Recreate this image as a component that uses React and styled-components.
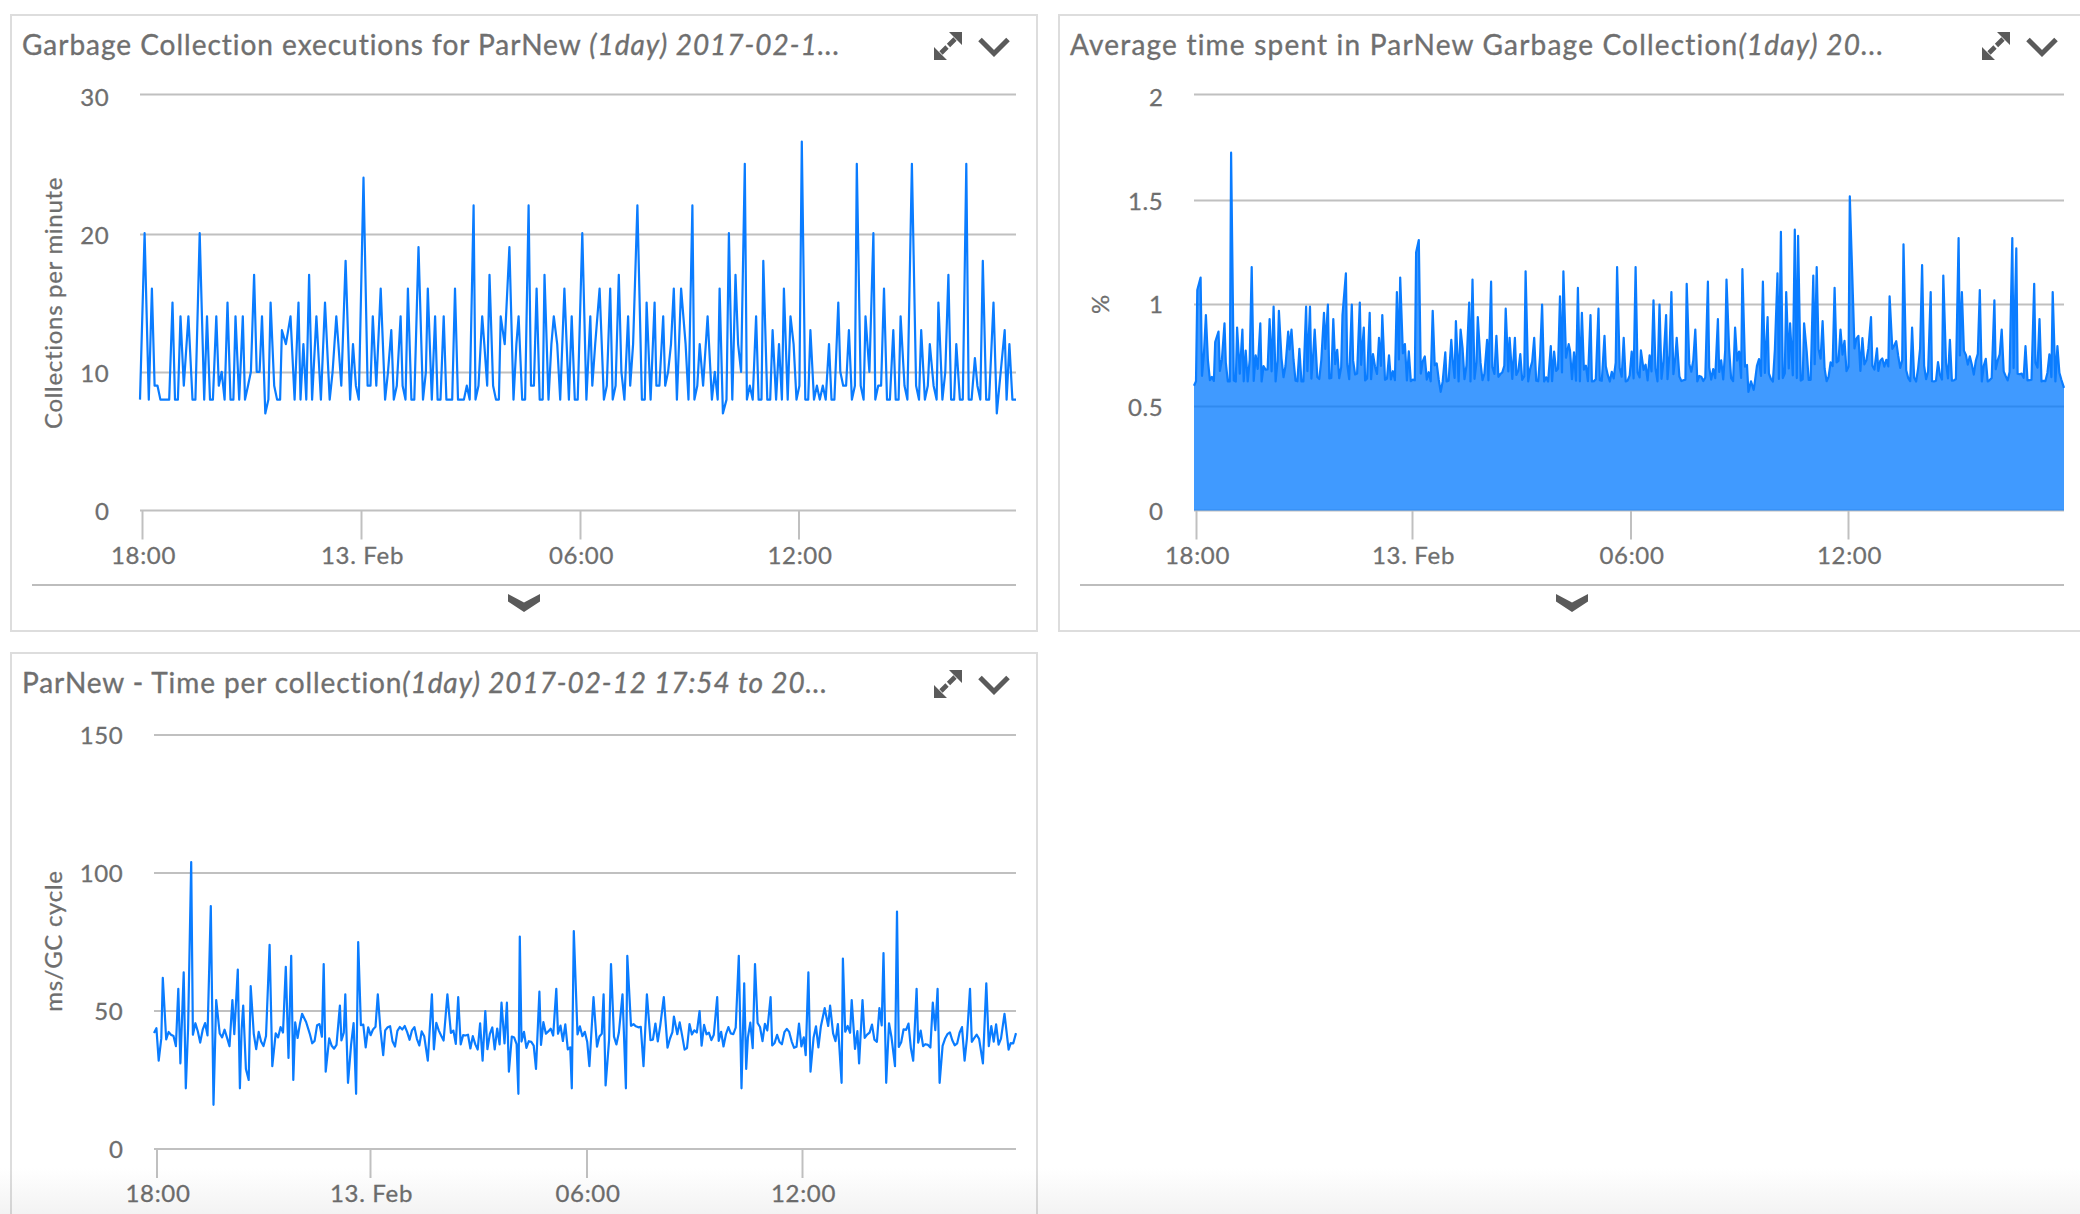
import React from 'react';
import styled, { createGlobalStyle } from 'styled-components';

const GlobalStyle = createGlobalStyle`
  html, body {
    margin: 0;
    height: 100%;
    overflow: hidden;
    background: #fff;
    font-family: Lato, "Liberation Sans", sans-serif;
  }
`;

const Dashboard = styled.div`
  display: grid;
  grid-template-columns: 1028px 1028px;
  grid-auto-rows: 618px;
  gap: 20px;
  padding: 14px 0 0 10px;
  width: 2080px;
  height: 1214px;
  box-sizing: border-box;
  overflow: hidden;
`;

const Card = styled.section`
  display: flex;
  flex-direction: column;
  border: 2px solid #ddd;
  background: #fff;
`;

const Header = styled.header`
  display: flex;
  justify-content: space-between;
  align-items: flex-start;
  height: 60px;
  box-sizing: border-box;
  padding: 16px 26px 0 10px;
  color: #6f6f6f;
`;

const Title = styled.h2`
  margin: -3px 0 0;
  font-size: 28px;
  line-height: 30px;
  font-weight: 400;
  white-space: nowrap;
  letter-spacing: ${(p) => p.$tracking}px;
  -webkit-text-stroke: 0.35px #6f6f6f;
  em { font-style: italic; }
`;

const Tools = styled.div`
  display: flex;
  align-items: flex-start;
  gap: 16px;
`;

const ExpandIcon = styled.svg`
  width: 28px;
  height: 28px;
`;

const DownIcon = styled.svg`
  width: 32px;
  height: 20px;
  margin-top: 5px;
`;

const Chart = styled.svg`
  display: block;
  width: 1024px;
  height: 508px;
  flex: none;
`;

const AxisLabel = styled.text`
  font-family: Lato, "Liberation Sans", sans-serif;
  font-size: 24px;
  letter-spacing: 0.7px;
  fill: #6e6e6e;
  stroke: #6e6e6e;
  stroke-width: 0.3px;
  text-anchor: ${(p) => p.$anchor || 'middle'};
`;

const Footer = styled.footer`
  display: flex;
  justify-content: center;
  margin: 0 20px;
  padding-top: 8px;
  border-top: 2px solid #bdbdbd;
`;

const FooterIcon = styled.svg`
  width: 32px;
  height: 18px;
`;

const BottomFade = styled.div`
  position: fixed;
  left: 0;
  right: 0;
  bottom: 0;
  height: 46px;
  background: linear-gradient(to bottom, #fff, #f3f3f3);
  mix-blend-mode: multiply;
  pointer-events: none;
`;

// small seeded generator, keeps the noise the same on every reload
const makeRandom = (seed) => {
  let s = seed;
  return () => {
    s = (s * 16807) % 2147483647;
    return s / 2147483647;
  };
};

function buildSeries({ from, to, step, seed, base, spikes }) {
  const next = makeRandom(seed);
  const points = [];
  for (let x = from; x <= to; x += step) points.push([x, base(next(), x)]);
  const kept = points.filter(([x]) => !spikes.some(([sx]) => Math.abs(sx - x) < step * 0.6));
  return [...kept, ...spikes].sort((a, b) => a[0] - b[0]);
}

const collectionsSeries = buildSeries({
  from: 211,
  to: 1532,
  step: 4.4,
  seed: 4711,
  base: (r) => [8, 8, 8, 8, 8, 9, 9, 9, 8, 10, 8, 12][Math.floor(r * 12)],
  spikes: [
    [211, 8], [218, 20], [229, 16], [260, 15], [272, 14], [284, 14], [301, 20], [312, 14], [326, 14], [343, 15],
    [355, 14], [366, 14], [383, 17], [395, 14], [400, 7], [408, 15], [425, 13], [438, 14], [450, 15], [466, 17],
    [477, 14], [490, 15], [507, 14], [521, 18], [548, 24], [562, 14], [574, 16], [590, 13], [604, 14], [615, 16],
    [631, 19], [645, 16], [656, 14], [669, 14], [686, 16], [714, 22], [727, 14], [738, 17], [755, 14], [768, 19],
    [782, 14], [797, 22], [809, 16], [821, 17], [835, 14], [851, 16], [862, 14], [878, 20], [890, 14], [904, 16],
    [920, 16], [933, 17], [947, 14], [961, 22], [975, 15], [987, 15], [1000, 14], [1016, 16], [1027, 16], [1044, 22],
    [1055, 12], [1067, 14], [1085, 16], [1090, 7], [1099, 20], [1109, 17], [1123, 25], [1140, 14], [1151, 18],
    [1165, 13], [1182, 16], [1192, 14], [1209, 26.6], [1222, 13], [1250, 12], [1264, 15], [1280, 13], [1292, 25],
    [1305, 14], [1317, 20], [1333, 16], [1347, 13], [1358, 14], [1375, 25], [1389, 13], [1402, 12], [1415, 15],
    [1430, 17], [1442, 12], [1457, 25], [1470, 11], [1482, 18], [1498, 15], [1503, 7], [1515, 13], [1522, 12],
    [1532, 8],
  ],
});

const averageSeries = buildSeries({
  from: 232,
  to: 1544,
  step: 3,
  seed: 913,
  base: (r, x) => 0.62 + r * r * 0.16 + (x > 1190 && x < 1300 ? 0.05 : 0),
  spikes: [
    [232, 0.6], [237, 1.06], [242, 1.12], [250, 0.94], [264, 0.81], [269, 0.86], [278, 0.9], [288, 1.72], [297, 0.88],
    [305, 0.87], [319, 1.17], [332, 0.9], [346, 0.92], [352, 0.98], [360, 0.96], [374, 0.86], [379, 0.87], [401, 0.98],
    [407, 0.98], [414, 0.87], [428, 0.95], [434, 0.99], [442, 0.92], [456, 0.94], [461, 1.14], [470, 0.99], [482, 1.0],
    [488, 0.88], [497, 0.95], [511, 0.83], [516, 0.94], [538, 1.05], [543, 1.12], [550, 0.8], [567, 1.24], [571, 1.3],
    [592, 0.96], [604, 0.57], [611, 0.76], [620, 0.82], [627, 0.91], [634, 0.87], [647, 1.0], [652, 1.11], [660, 0.93],
    [674, 0.82], [680, 1.1], [688, 0.84], [702, 0.97], [708, 0.83], [716, 0.83], [732, 1.15], [745, 0.83], [757, 0.99],
    [770, 0.79], [784, 1.03], [789, 1.15], [797, 0.8], [811, 1.07], [817, 0.95], [830, 0.94], [842, 0.97], [851, 0.84],
    [870, 1.17], [880, 0.83], [898, 1.17], [906, 0.77], [925, 1.01], [934, 0.99], [944, 0.94], [952, 1.05], [960, 0.83],
    [975, 1.09], [988, 0.87], [1007, 1.1], [1022, 0.92], [1035, 1.11], [1048, 0.88], [1059, 1.16], [1068, 0.57],
    [1076, 0.58], [1090, 1.1], [1097, 0.93], [1112, 1.14], [1117, 1.34], [1125, 1.05], [1131, 0.9], [1138, 1.35],
    [1143, 1.32], [1152, 0.9], [1166, 1.13], [1171, 1.17], [1180, 0.91], [1198, 1.07], [1207, 0.87], [1221, 1.51],
    [1226, 1.0], [1234, 0.84], [1253, 0.93], [1262, 0.78], [1281, 1.03], [1302, 1.28], [1315, 0.88], [1330, 1.18],
    [1343, 1.05], [1362, 1.13], [1372, 0.82], [1385, 1.31], [1390, 1.05], [1417, 1.06], [1439, 1.01], [1450, 0.87],
    [1466, 1.31], [1472, 1.26], [1486, 0.79], [1499, 1.09], [1507, 0.92], [1527, 1.05], [1534, 0.79], [1540, 0.63],
    [1544, 0.59],
  ],
});

const timeSeries = buildSeries({
  from: 228,
  to: 1503,
  step: 3.6,
  seed: 2203,
  base: (r) => 36 + r * 10,
  spikes: [
    [228, 42], [235, 32], [241, 62], [264, 58], [267, 31], [272, 64], [275, 22], [283, 104], [312, 88], [316, 16],
    [320, 54], [344, 54], [352, 65], [355, 22], [360, 52], [364, 29], [368, 25], [371, 59], [399, 74], [403, 30],
    [423, 66], [427, 33], [431, 70], [434, 25], [447, 49], [453, 46], [479, 67], [482, 28], [503, 52], [511, 56],
    [515, 24], [527, 20], [530, 75], [559, 56], [567, 34], [633, 32], [639, 56], [662, 56], [678, 55], [714, 32],
    [718, 50], [742, 53], [750, 53], [753, 28], [767, 20], [769, 77], [793, 29], [798, 57], [823, 58], [846, 22],
    [849, 79], [872, 30], [878, 55], [893, 56], [896, 23], [904, 67], [921, 56], [926, 22], [928, 70], [952, 30],
    [957, 56], [982, 55], [997, 48], [1035, 50], [1061, 55], [1093, 70], [1097, 22], [1101, 60], [1104, 29],
    [1117, 67], [1140, 55], [1192, 34], [1196, 64], [1199, 28], [1220, 51], [1228, 52], [1245, 24], [1247, 69],
    [1260, 54], [1271, 31], [1276, 54], [1301, 51], [1307, 71], [1311, 24], [1324, 30], [1327, 86], [1351, 32],
    [1356, 58], [1380, 53], [1387, 58], [1390, 24], [1427, 32], [1435, 58], [1454, 31], [1459, 60], [1486, 49],
    [1492, 36], [1503, 42],
  ],
});

const cards = [
  {
    title: 'Garbage Collection executions for ParNew ',
    range: '(1day) 2017-02-1...',
    tracking: 0.98,
    left: 128,
    top: 18.5,
    bottom: 434.5,
    yMax: 30,
    yTicks: [
      { label: '30', y: 18.5, shift: 2.5 },
      { label: '20', y: 158.5 },
      { label: '10', y: 296.5 },
      { label: '0', y: 434.5 },
    ],
    xTicks: [[130.5, '18:00'], [349.5, '13. Feb'], [568.5, '06:00'], [787, '12:00']],
    yTitle: { text: 'Collections per minute', x: 50, y: 227 },
    series: collectionsSeries,
  },
  {
    title: 'Average time spent in ParNew Garbage Collection',
    range: '(1day) 20...',
    tracking: 1.2,
    left: 134,
    top: 18.5,
    bottom: 434.5,
    yMax: 2,
    yTicks: [
      { label: '2', y: 18.5, shift: 2.5 },
      { label: '1.5', y: 124.5 },
      { label: '1', y: 228.5, shift: -1 },
      { label: '0.5', y: 330.5 },
      { label: '0', y: 434.5 },
    ],
    xTicks: [[136.5, '18:00'], [352.5, '13. Feb'], [571, '06:00'], [788.5, '12:00']],
    yTitle: { text: '%', x: 49, y: 228 },
    series: averageSeries,
    area: true,
  },
  {
    title: 'ParNew - Time per collection',
    range: '(1day) 2017-02-12 17:54 to 20...',
    tracking: 0.9,
    left: 142,
    top: 21,
    bottom: 435,
    yMax: 150,
    yTicks: [
      { label: '150', y: 21 },
      { label: '100', y: 159 },
      { label: '50', y: 297 },
      { label: '0', y: 435 },
    ],
    xTicks: [[145, '18:00'], [358.5, '13. Feb'], [575, '06:00'], [790.5, '12:00']],
    yTitle: { text: 'ms/GC cycle', x: 50, y: 227 },
    series: timeSeries,
  },
];

const PLOT_RIGHT = 1004;
const GRID = '#c0c0c0';

function PlotChart({ left, top, bottom, yMax, yTicks, xTicks, yTitle, series, area }) {
  const minX = series[0][0];
  const maxX = series[series.length - 1][0];
  const toX = (x) => left + ((x - minX) / (maxX - minX)) * (PLOT_RIGHT - left);
  const toY = (v) => bottom - (v / yMax) * (bottom - top);
  const line = series.map(([x, v]) => `${toX(x).toFixed(1)},${toY(v).toFixed(1)}`).join(' ');

  return (
    <Chart viewBox="0 0 1024 508">
      {yTicks.map((tick) => (
        <line key={tick.label} x1={left} x2={PLOT_RIGHT} y1={tick.y} y2={tick.y} stroke={GRID} strokeWidth="2" />
      ))}
      {xTicks.map(([x]) => (
        <line key={x} x1={x} x2={x} y1={bottom} y2={bottom + 29} stroke={GRID} strokeWidth="2" />
      ))}
      {area && (
        <polygon points={`${left},${bottom} ${line} ${PLOT_RIGHT},${bottom}`} fill="#0078ff" fillOpacity="0.75" />
      )}
      <polyline points={line} fill="none" stroke="#0a7cff" strokeWidth="2.2" strokeLinejoin="round" />
      {yTicks.map((tick) => (
        <AxisLabel key={tick.label} $anchor="end" x={left - 30.5} y={tick.y + 9 + (tick.shift || 0)}>
          {tick.label}
        </AxisLabel>
      ))}
      {xTicks.map(([x, label]) => (
        <AxisLabel key={label} x={x + 1} y={bottom + 53}>{label}</AxisLabel>
      ))}
      <AxisLabel x={yTitle.x} y={yTitle.y} transform={`rotate(-90 ${yTitle.x} ${yTitle.y})`}>
        {yTitle.text}
      </AxisLabel>
    </Chart>
  );
}

function Panel({ title, range, tracking, ...chart }) {
  return (
    <Card>
      <Header>
        <Title $tracking={tracking}>
          {title}
          <em>{range}</em>
        </Title>
        <Tools>
          <ExpandIcon viewBox="0 0 28 28">
            <path d="M28 0V13L15 0ZM0 28V15L13 28Z" fill="#5a5a5a" />
            <path d="M21 7L14.5 13.5M7 21L13 15" stroke="#5a5a5a" strokeWidth="4.6" />
          </ExpandIcon>
          <DownIcon viewBox="0 0 32 20">
            <path d="M2 2.5L16 16.5L30 2.5" fill="none" stroke="#5a5a5a" strokeWidth="5" />
          </DownIcon>
        </Tools>
      </Header>
      <PlotChart {...chart} />
      <Footer>
        <FooterIcon viewBox="0 0 32 18">
          <path d="M0 0L16 8.5L32 0V7.5L16 18L0 7.5Z" fill="#5a5a5a" />
        </FooterIcon>
      </Footer>
    </Card>
  );
}

export default function App() {
  return (
    <>
      <GlobalStyle />
      <Dashboard>
        {cards.map((card) => (
          <Panel key={card.title} {...card} />
        ))}
      </Dashboard>
      <BottomFade />
    </>
  );
}
